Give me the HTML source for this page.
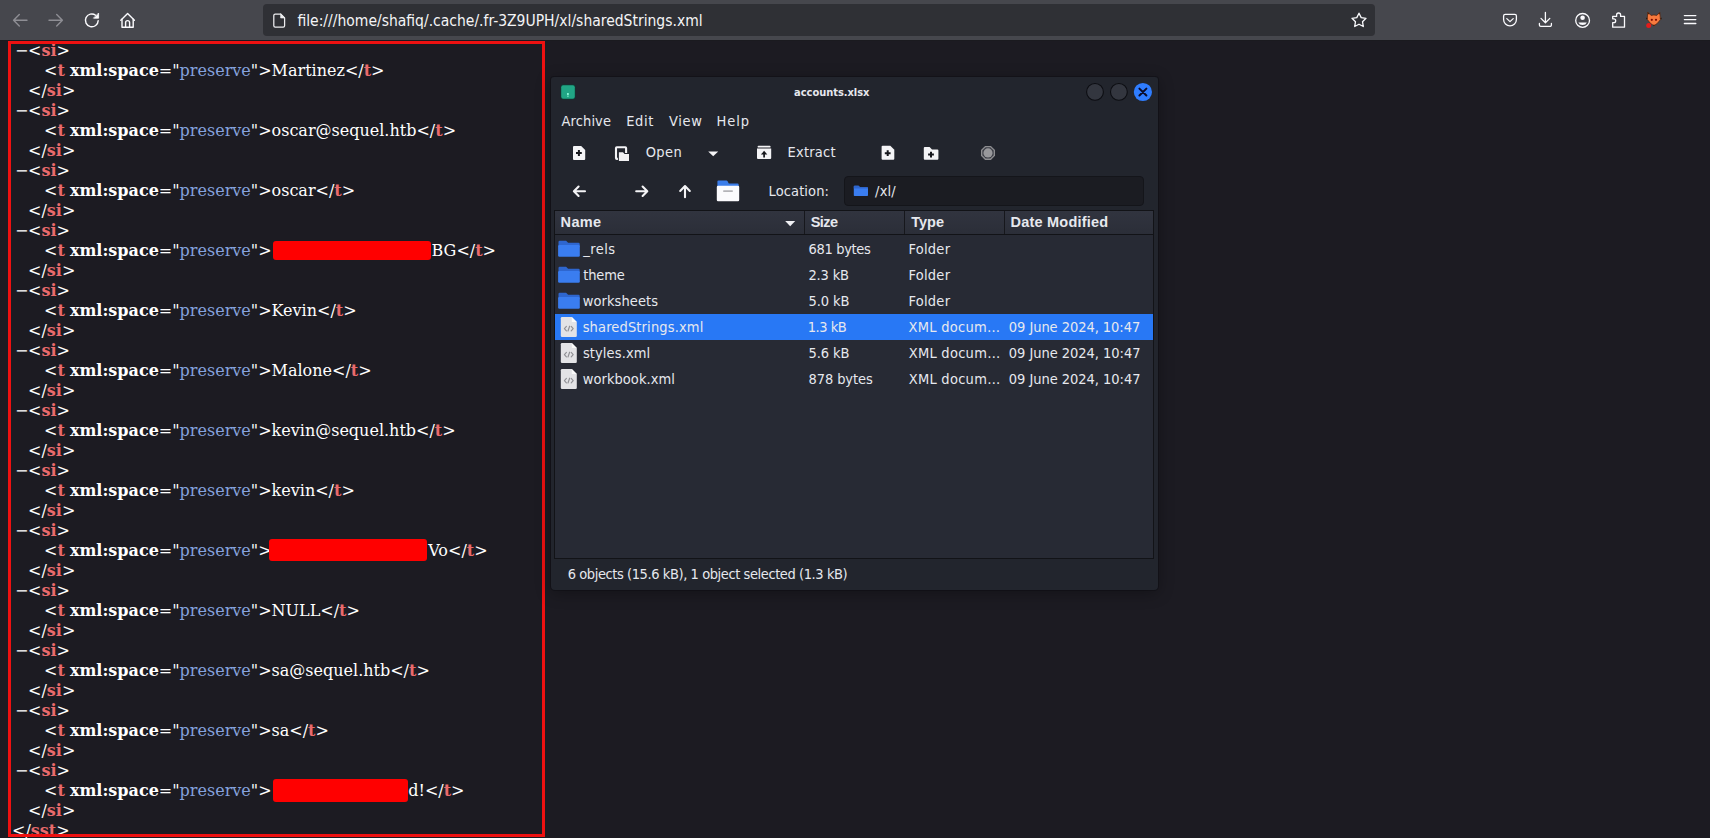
<!DOCTYPE html>
<html><head><meta charset="utf-8"><title>sharedStrings.xml</title>
<style>
html,body{margin:0;padding:0;}
body{width:1710px;height:838px;overflow:hidden;background:#1c1b22;position:relative;font-family:"Liberation Sans","DejaVu Sans",sans-serif;}
.abs{position:absolute;}
/* browser toolbar */
#tb{position:absolute;left:0;top:0;width:1710px;height:40px;background:#46474d;}
#tbline{position:absolute;left:0;top:40px;width:1710px;height:1px;background:#1a1a1f;}
#url{position:absolute;left:263px;top:4px;width:1112px;height:32px;border-radius:4px;background:#2f3035;}
#urltxt{position:absolute;left:297.4px;top:11px;font-family:"DejaVu Sans Condensed","DejaVu Sans","Liberation Sans",sans-serif;font-size:15.5px;line-height:20px;color:#f4f4f6;white-space:pre;}
/* xml */
#xml{position:absolute;left:-1px;top:41px;font-family:"DejaVu Serif","Liberation Serif",serif;font-size:16px;line-height:20px;color:#fff;}
#xml div{height:20px;white-space:pre;}
.l0{padding-left:13px;} .l1{padding-left:29px;} .l2{padding-left:45px;}
.tg{color:#e96a6c;font-weight:bold;} .an{font-weight:bold;} .av{color:#85a2dd;}
.ex{position:absolute;left:16px;}
.rd{display:inline-block;height:1px;}
.red{position:absolute;background:#ff0000;border-radius:3px;}
#frame{position:absolute;left:8px;top:40.8px;width:537.3px;height:795.8px;border:3.9px solid #ee1111;box-sizing:border-box;}
/* file roller window */
#win{position:absolute;left:551px;top:77px;width:607px;height:513px;background:#22252d;border-radius:3px 3px 4px 4px;box-shadow:0 0 0 1px rgba(10,10,14,.35),0 3px 16px rgba(0,0,0,.32);}
.t{position:absolute;white-space:pre;font-family:"DejaVu Sans Condensed","DejaVu Sans","Liberation Sans",sans-serif;font-size:14.5px;line-height:20px;color:#e6e8ee;}
.b{font-weight:bold;}
#loc{position:absolute;left:844px;top:176px;width:300px;height:30px;box-sizing:border-box;border:1px solid #14151a;border-radius:4px;background:#1b1c22;}
#list{position:absolute;left:554px;top:210px;width:600px;height:349px;box-sizing:border-box;border:1px solid #121317;background:#272a34;}
#hdr{position:absolute;left:555px;top:211px;width:598px;height:23px;background:linear-gradient(#31343f,#2b2e38);border-bottom:1px solid #121317;}
.sep{position:absolute;top:211px;width:1px;height:23px;background:#16171c;}
#sel{position:absolute;left:555px;top:314px;width:598px;height:26px;background:#2878f5;}
</style></head><body>
<div id="tb"></div><div id="tbline"></div>
<div id="url"></div>

<svg class="abs" style="left:0;top:0" width="1710" height="40" viewBox="0 0 1710 40" fill="none" stroke-linecap="round" stroke-linejoin="round">
<!-- back / forward (disabled) -->
<g stroke="#8e8e94" stroke-width="1.4">
<path d="M27 20.3H13.6M19.3 14.6L13.6 20.3L19.3 26"/>
<path d="M49 20.3H62.4M56.7 14.6L62.4 20.3L56.7 26"/>
</g>
<!-- reload -->
<g stroke="#fbfbfe" stroke-width="1.4">
<path d="M98.2 20.6A6.4 6.4 0 1 1 95.6 15.2"/>
<path d="M98.6 13.4V18.2H93.8Z" fill="#fbfbfe" stroke-width="0.8"/>
<!-- home -->
<path d="M120.8 20.2L127.6 13.6L134.4 20.2"/>
<path d="M122 19.2V27.2H133.2V19.2"/>
<path d="M125.6 27V22.6A2 2 0 0 1 129.6 22.6V27"/>
<!-- page icon in urlbar -->
<path d="M273.8 15.4A1.4 1.4 0 0 1 275.2 14H280.6L284.6 18V25.8A1.4 1.4 0 0 1 283.2 27.2H275.2A1.4 1.4 0 0 1 273.8 25.8Z" stroke-width="1.25" stroke="#ededf0"/>
<path d="M280.6 14V18H284.6Z" fill="#ededf0" stroke-width="0.6" stroke="#ededf0"/>
<!-- star -->
<path d="M1359 13.2L1361.2 17.6L1366 18.3L1362.5 21.7L1363.3 26.5L1359 24.2L1354.7 26.5L1355.5 21.7L1352 18.3L1356.8 17.6Z" stroke-width="1.3"/>
<!-- pocket -->
<path d="M1503.6 16A1.6 1.6 0 0 1 1505.2 14.4H1514.8A1.6 1.6 0 0 1 1516.4 16V19.4A6.4 6.4 0 0 1 1503.6 19.4Z" stroke-width="1.3"/>
<path d="M1506.8 18.6L1510 21.6L1513.2 18.6" stroke-width="1.3"/>
<!-- download -->
<path d="M1545.4 12.4V22.6M1541 18.4L1545.4 22.8L1549.8 18.4" stroke-width="1.3"/>
<path d="M1539.4 23.4V25A1.4 1.4 0 0 0 1540.8 26.4H1550A1.4 1.4 0 0 0 1551.4 25V23.4" stroke-width="1.3"/>
<!-- account -->
<circle cx="1582.6" cy="20.4" r="6.9" stroke-width="1.3"/>
<circle cx="1582.6" cy="17.8" r="2.3" fill="#fbfbfe" stroke="none"/>
<path d="M1578.4 22.4H1586.8A4.4 3.6 0 0 1 1578.4 22.4Z" fill="#fbfbfe" stroke="none"/>
<!-- extensions puzzle -->
<path d="M1612.7 27.2V22.6H1613.8A1.9 1.9 0 0 0 1613.8 18.8H1612.7V16.4H1616.6V15A2 2 0 0 1 1620.6 15V16.4H1624.5V27.2Z" stroke-width="1.3"/>
<!-- hamburger -->
<path d="M1684.4 15.6H1695.8M1684.4 19.6H1695.8M1684.4 23.5H1695.8" stroke-width="1.4"/>
</g>
<!-- foxyproxy fox -->
<g stroke="none">
<path d="M1648 12.4L1651 15.4Q1653.9 14.6 1656.8 15.4L1659.8 12.4L1660.4 19.6Q1658 23.6 1653.9 25.8Q1649.8 23.6 1647.4 19.6Z" fill="#f77a3e" stroke="#5a2408" stroke-width="0.7"/>
<circle cx="1651.8" cy="19.8" r="1.1" fill="#7a0a02"/><circle cx="1656" cy="19.8" r="1.1" fill="#7a0a02"/><path d="M1648 12.4L1649.4 13.8L1648.1 14.6ZM1659.8 12.4L1658.4 13.8L1659.7 14.6Z" fill="#3a1605"/><path d="M1646.2 17.6L1647.6 18.4L1646.2 19.4ZM1661.6 17.6L1660.2 18.4L1661.6 19.4Z" fill="#2a1608"/>
<path d="M1653 24.8L1653.9 26L1654.8 24.8Z" fill="#1a0a05"/>
<circle cx="1648.7" cy="25.5" r="2.5" fill="#e61a1a"/>
</g>
</svg>
<div id="urltxt">file:///home/shafiq/.cache/.fr-3Z9UPH/xl/sharedStrings.xml</div>
<div id="xml">
<div class="l1"><span class="ex">−</span>&lt;<span class="tg">si</span>&gt;</div>
<div class="l2">&lt;<span class="tg">t</span> <span class="an">xml:space</span>="<span class="av">preserve</span>"&gt;Martinez&lt;/<span class="tg">t</span>&gt;</div>
<div class="l1">&lt;/<span class="tg">si</span>&gt;</div>
<div class="l1"><span class="ex">−</span>&lt;<span class="tg">si</span>&gt;</div>
<div class="l2">&lt;<span class="tg">t</span> <span class="an">xml:space</span>="<span class="av">preserve</span>"&gt;oscar@sequel.htb&lt;/<span class="tg">t</span>&gt;</div>
<div class="l1">&lt;/<span class="tg">si</span>&gt;</div>
<div class="l1"><span class="ex">−</span>&lt;<span class="tg">si</span>&gt;</div>
<div class="l2">&lt;<span class="tg">t</span> <span class="an">xml:space</span>="<span class="av">preserve</span>"&gt;oscar&lt;/<span class="tg">t</span>&gt;</div>
<div class="l1">&lt;/<span class="tg">si</span>&gt;</div>
<div class="l1"><span class="ex">−</span>&lt;<span class="tg">si</span>&gt;</div>
<div class="l2">&lt;<span class="tg">t</span> <span class="an">xml:space</span>="<span class="av">preserve</span>"&gt;<span class="rd" style="width:160px"></span>BG&lt;/<span class="tg">t</span>&gt;</div>
<div class="l1">&lt;/<span class="tg">si</span>&gt;</div>
<div class="l1"><span class="ex">−</span>&lt;<span class="tg">si</span>&gt;</div>
<div class="l2">&lt;<span class="tg">t</span> <span class="an">xml:space</span>="<span class="av">preserve</span>"&gt;Kevin&lt;/<span class="tg">t</span>&gt;</div>
<div class="l1">&lt;/<span class="tg">si</span>&gt;</div>
<div class="l1"><span class="ex">−</span>&lt;<span class="tg">si</span>&gt;</div>
<div class="l2">&lt;<span class="tg">t</span> <span class="an">xml:space</span>="<span class="av">preserve</span>"&gt;Malone&lt;/<span class="tg">t</span>&gt;</div>
<div class="l1">&lt;/<span class="tg">si</span>&gt;</div>
<div class="l1"><span class="ex">−</span>&lt;<span class="tg">si</span>&gt;</div>
<div class="l2">&lt;<span class="tg">t</span> <span class="an">xml:space</span>="<span class="av">preserve</span>"&gt;kevin@sequel.htb&lt;/<span class="tg">t</span>&gt;</div>
<div class="l1">&lt;/<span class="tg">si</span>&gt;</div>
<div class="l1"><span class="ex">−</span>&lt;<span class="tg">si</span>&gt;</div>
<div class="l2">&lt;<span class="tg">t</span> <span class="an">xml:space</span>="<span class="av">preserve</span>"&gt;kevin&lt;/<span class="tg">t</span>&gt;</div>
<div class="l1">&lt;/<span class="tg">si</span>&gt;</div>
<div class="l1"><span class="ex">−</span>&lt;<span class="tg">si</span>&gt;</div>
<div class="l2">&lt;<span class="tg">t</span> <span class="an">xml:space</span>="<span class="av">preserve</span>"&gt;<span class="rd" style="width:156.7px"></span>Vo&lt;/<span class="tg">t</span>&gt;</div>
<div class="l1">&lt;/<span class="tg">si</span>&gt;</div>
<div class="l1"><span class="ex">−</span>&lt;<span class="tg">si</span>&gt;</div>
<div class="l2">&lt;<span class="tg">t</span> <span class="an">xml:space</span>="<span class="av">preserve</span>"&gt;NULL&lt;/<span class="tg">t</span>&gt;</div>
<div class="l1">&lt;/<span class="tg">si</span>&gt;</div>
<div class="l1"><span class="ex">−</span>&lt;<span class="tg">si</span>&gt;</div>
<div class="l2">&lt;<span class="tg">t</span> <span class="an">xml:space</span>="<span class="av">preserve</span>"&gt;sa@sequel.htb&lt;/<span class="tg">t</span>&gt;</div>
<div class="l1">&lt;/<span class="tg">si</span>&gt;</div>
<div class="l1"><span class="ex">−</span>&lt;<span class="tg">si</span>&gt;</div>
<div class="l2">&lt;<span class="tg">t</span> <span class="an">xml:space</span>="<span class="av">preserve</span>"&gt;sa&lt;/<span class="tg">t</span>&gt;</div>
<div class="l1">&lt;/<span class="tg">si</span>&gt;</div>
<div class="l1"><span class="ex">−</span>&lt;<span class="tg">si</span>&gt;</div>
<div class="l2">&lt;<span class="tg">t</span> <span class="an">xml:space</span>="<span class="av">preserve</span>"&gt;<span class="rd" style="width:136.7px"></span>d!&lt;/<span class="tg">t</span>&gt;</div>
<div class="l1">&lt;/<span class="tg">si</span>&gt;</div>
<div class="l0">&lt;/<span class="tg">sst</span>&gt;</div>
</div>
<div class="red" style="left:272.8px;top:240.8px;width:158.4px;height:19px"></div>
<div class="red" style="left:268.9px;top:538.6px;width:158.3px;height:22.3px"></div>
<div class="red" style="left:272.8px;top:778.6px;width:135.4px;height:23.4px"></div>
<div id="frame"></div>
<div id="win"></div>
<div id="loc"></div><div id="list"></div><div id="hdr"></div>
<div class="sep" style="left:804px"></div>
<div class="sep" style="left:904px"></div>
<div class="sep" style="left:1004px"></div>
<div id="sel"></div>
<svg class="abs" style="left:0;top:0" width="1710" height="838" viewBox="0 0 1710 838">
<rect x="560.6" y="84.6" width="14.8" height="14.8" rx="2.4" fill="#0d3b33"/><rect x="561.2" y="85.2" width="13.6" height="13.6" rx="2" fill="#21a685"/><rect x="567" y="93" width="1.8" height="2.2" fill="#86f5d4"/><rect x="567" y="95.7" width="1.8" height="1.2" fill="#5fd9b6"/>
<circle cx="1095" cy="91.9" r="8.4" fill="#33363f" stroke="#0c0d12" stroke-width="1.1"/><circle cx="1118.9" cy="91.9" r="8.4" fill="#33363f" stroke="#0c0d12" stroke-width="1.1"/>
<circle cx="1142.9" cy="92" r="9.1" fill="#2f7dff"/><path d="M1139.4 88.6L1146.4 95.5M1146.4 88.6L1139.4 95.5" stroke="#0a0c2a" stroke-width="2" stroke-linecap="round"/>
<path d="M574.0 146.1H581.2L585.2 150.1V159.1Q585.2 160.1 584.2 160.1H574.0Q573 160.1 573 159.1V147.1Q573 146.1 574.0 146.1Z" fill="#f4f4f6"/><path d="M576.0 153H581.8M578.9 150.1V155.9" stroke="#16171c" stroke-width="2" stroke-linecap="butt"/>
<rect x="616" y="147.2" width="10.1" height="11.7" rx="0.8" fill="none" stroke="#f4f4f6" stroke-width="2.1"/>
<path d="M617.9 151.4H623.4L625 153.1H630V162H617.9Z" fill="#22252d"/><path d="M618.9 152.3H623L624.6 154.1H629V161.1H618.9Z" fill="#f1f1f3"/>
<path d="M708.2 151.4H718.2L713.2 156.2Z" fill="#f4f4f6"/>
<rect x="757.6" y="145.8" width="13" height="1.8" rx="0.9" fill="#f4f4f6"/><path d="M757 148.6H771.2V158Q771.2 159 770.2 159H758Q757 159 757 158Z" fill="#f4f4f6"/>
<path d="M764.1 157.4V153" stroke="#16171c" stroke-width="1.7"/><path d="M760.9 154.4L764.1 150.8L767.3 154.4Z" fill="#16171c"/>
<path d="M882.6 145.7H890.3L894.3 149.7V158.8Q894.3 159.8 893.3 159.8H882.6Q881.6 159.8 881.6 158.8V146.7Q881.6 145.7 882.6 145.7Z" fill="#f4f4f6"/><path d="M884.8 153.2H890.6M887.7 150.3V156.1" stroke="#16171c" stroke-width="2" stroke-linecap="butt"/>
<path d="M924.8 146.9H929.6L932 149.4H937.4Q938.4 149.4 938.4 150.4V158.8Q938.4 159.8 937.4 159.8H924.8Q923.8 159.8 923.8 158.8V147.9Q923.8 146.9 924.8 146.9Z" fill="#f4f4f6"/><path d="M928.1 154.6H933.9M931 151.7V157.5" stroke="#16171c" stroke-width="2" stroke-linecap="butt"/>
<path d="M995.02 155.81L990.91 159.92L985.09 159.92L980.98 155.81L980.98 149.99L985.09 145.88L990.91 145.88L995.02 149.99Z" fill="#8d8d90"/><path d="M993.64 155.23L990.33 158.54L985.67 158.54L982.36 155.23L982.36 150.57L985.67 147.26L990.33 147.26L993.64 150.57Z" fill="#3a3c44"/><circle cx="988" cy="152.9" r="4.6" fill="#98989b"/>
<g stroke="#f4f4f6" stroke-width="2.1" fill="none" stroke-linecap="round" stroke-linejoin="round"><path d="M585 191.3H574.2M578.6 186.6L573.9 191.3L578.6 196"/><path d="M636.2 191.3H647M642.6 186.6L647.3 191.3L642.6 196"/><path d="M685 197.2V186.4M680.2 190.9L685 186.1L689.8 190.9"/></g>
<path d="M717.4 181.6Q717.4 180.5 718.5 180.5H726.4Q727.2 180.5 727.6 181.2L728.8 183.6H737.6Q738.7 183.6 738.7 184.7V188H717.4Z" fill="#3b7de9"/><rect x="716.8" y="185.8" width="22.4" height="15.4" rx="1.2" fill="#fbfbfd"/><rect x="723" y="190.2" width="10" height="1.8" rx="0.9" fill="#b4b4b8"/>
<path d="M853.8 186.6Q853.8 185.8 854.6 185.8H858.6L860 187.2H867.2Q868 187.2 868 188V195.3Q868 196.1 867.2 196.1H854.6Q853.8 196.1 853.8 195.3Z" fill="#3a7df0"/><path d="M853.8 186.6Q853.8 185.8 854.6 185.8H858.6L860 187.2H867.2Q868 187.2 868 188V188.6H853.8Z" fill="#2e66cf"/>
<path d="M785.2 221H795.2L790.2 226.2Z" fill="#f0f0f4"/>
<path d="M558.5 241.89999999999998Q558.5 240.7 559.7 240.7H566.1L568.1 242.7H578.5Q579.7 242.7 579.7 243.89999999999998V246.7H558.5Z" fill="#2e66cf"/><rect x="558.1" y="244.89999999999998" width="21.7" height="11.9" rx="1.3" fill="#3a7df0"/>
<path d="M558.5 267.9Q558.5 266.7 559.7 266.7H566.1L568.1 268.7H578.5Q579.7 268.7 579.7 269.9V272.7H558.5Z" fill="#2e66cf"/><rect x="558.1" y="270.9" width="21.7" height="11.9" rx="1.3" fill="#3a7df0"/>
<path d="M558.5 293.9Q558.5 292.7 559.7 292.7H566.1L568.1 294.7H578.5Q579.7 294.7 579.7 295.9V298.7H558.5Z" fill="#2e66cf"/><rect x="558.1" y="296.9" width="21.7" height="11.9" rx="1.3" fill="#3a7df0"/>
<path d="M562.0 317H571.8L576.8 322V335.8Q576.8 337 575.5999999999999 337H562.0Q560.8 337 560.8 335.8V318.2Q560.8 317 562.0 317Z" fill="#e3e3e6"/><path d="M571.8 317L576.8 322H571.8Z" fill="#fafafa"/><path d="M566.4 326.4L564.4 328.6L566.4 330.8M571.1999999999999 326.4L573.1999999999999 328.6L571.1999999999999 330.8M569.5999999999999 326.2L568.0 331" stroke="#909095" stroke-width="1.15" fill="none" stroke-linecap="round" stroke-linejoin="round"/>
<path d="M562.0 343H571.8L576.8 348V361.8Q576.8 363 575.5999999999999 363H562.0Q560.8 363 560.8 361.8V344.2Q560.8 343 562.0 343Z" fill="#e3e3e6"/><path d="M571.8 343L576.8 348H571.8Z" fill="#fafafa"/><path d="M566.4 352.4L564.4 354.6L566.4 356.8M571.1999999999999 352.4L573.1999999999999 354.6L571.1999999999999 356.8M569.5999999999999 352.2L568.0 357" stroke="#909095" stroke-width="1.15" fill="none" stroke-linecap="round" stroke-linejoin="round"/>
<path d="M562.0 369H571.8L576.8 374V387.8Q576.8 389 575.5999999999999 389H562.0Q560.8 389 560.8 387.8V370.2Q560.8 369 562.0 369Z" fill="#e3e3e6"/><path d="M571.8 369L576.8 374H571.8Z" fill="#fafafa"/><path d="M566.4 378.4L564.4 380.6L566.4 382.8M571.1999999999999 378.4L573.1999999999999 380.6L571.1999999999999 382.8M569.5999999999999 378.2L568.0 383" stroke="#909095" stroke-width="1.15" fill="none" stroke-linecap="round" stroke-linejoin="round"/>
</svg>
<div class="t b" id="ttl" style="left:794.1px;top:82.8px;font-size:11px;letter-spacing:-0.03px">accounts.xlsx</div>
<div class="t" id="m1" style="left:561.6px;top:110.8px;letter-spacing:0.10px">Archive</div>
<div class="t" id="m2" style="left:626.2px;top:110.8px;letter-spacing:0.64px">Edit</div>
<div class="t" id="m3" style="left:668.9px;top:110.8px;letter-spacing:0.67px">View</div>
<div class="t" id="m4" style="left:716.5px;top:110.8px;letter-spacing:0.95px">Help</div>
<div class="t" id="open" style="left:645.7px;top:142.4px;letter-spacing:0.38px">Open</div>
<div class="t" id="extr" style="left:787.5px;top:142.4px;letter-spacing:0.22px">Extract</div>
<div class="t" id="locl" style="left:768.5px;top:180.8px;letter-spacing:0.12px">Location:</div>
<div class="t" id="path" style="left:875.1px;top:180.8px;letter-spacing:0.17px">/xl/</div>
<div class="t b" id="h1" style="left:560.6px;top:212.1px;letter-spacing:0.36px;font-family:'Liberation Sans',sans-serif">Name</div>
<div class="t b" id="h2" style="left:810.7px;top:212.1px;letter-spacing:-0.57px;font-family:'Liberation Sans',sans-serif">Size</div>
<div class="t b" id="h3" style="left:911.3px;top:212.1px;letter-spacing:-0.02px;font-family:'Liberation Sans',sans-serif">Type</div>
<div class="t b" id="h4" style="left:1010.5px;top:212.1px;letter-spacing:0.22px;font-family:'Liberation Sans',sans-serif">Date Modified</div>
<div class="t" id="n0" style="left:583.3px;top:238.8px;letter-spacing:0.46px">_rels</div>
<div class="t" id="s0" style="left:808.6px;top:238.8px;letter-spacing:-0.34px">681 bytes</div>
<div class="t" id="y0" style="left:908.4px;top:238.8px;letter-spacing:0.27px">Folder</div>
<div class="t" id="n1" style="left:583.2px;top:264.8px;letter-spacing:-0.11px">theme</div>
<div class="t" id="s1" style="left:808.5px;top:264.8px;letter-spacing:-0.18px">2.3 kB</div>
<div class="t" id="y1" style="left:908.4px;top:264.8px;letter-spacing:0.27px">Folder</div>
<div class="t" id="n2" style="left:582.7px;top:290.8px;letter-spacing:0.09px">worksheets</div>
<div class="t" id="s2" style="left:808.4px;top:290.8px;letter-spacing:-0.05px">5.0 kB</div>
<div class="t" id="y2" style="left:908.4px;top:290.8px;letter-spacing:0.27px">Folder</div>
<div class="t" id="n3" style="left:582.7px;top:316.8px;letter-spacing:0.14px">sharedStrings.xml</div>
<div class="t" id="s3" style="left:807.8px;top:316.8px;letter-spacing:-0.50px">1.3 kB</div>
<div class="t" id="y3" style="left:908.5px;top:316.8px;letter-spacing:0.27px">XML docum…</div>
<div class="t" id="d3" style="left:1008.8px;top:316.8px;letter-spacing:-0.05px">09 June 2024, 10:47</div>
<div class="t" id="n4" style="left:582.9px;top:342.8px;letter-spacing:0.11px">styles.xml</div>
<div class="t" id="s4" style="left:808.4px;top:342.8px;letter-spacing:-0.05px">5.6 kB</div>
<div class="t" id="y4" style="left:908.7px;top:342.8px;letter-spacing:0.27px">XML docum…</div>
<div class="t" id="d4" style="left:1008.8px;top:342.8px;letter-spacing:-0.04px">09 June 2024, 10:47</div>
<div class="t" id="n5" style="left:582.7px;top:368.8px;letter-spacing:0.06px">workbook.xml</div>
<div class="t" id="s5" style="left:808.5px;top:368.8px;letter-spacing:-0.10px">878 bytes</div>
<div class="t" id="y5" style="left:908.7px;top:368.8px;letter-spacing:0.27px">XML docum…</div>
<div class="t" id="d5" style="left:1008.8px;top:368.8px;letter-spacing:-0.04px">09 June 2024, 10:47</div>
<div class="t" id="stat" style="left:567.7px;top:563.8px;letter-spacing:-0.42px">6 objects (15.6 kB), 1 object selected (1.3 kB)</div>
</body></html>
